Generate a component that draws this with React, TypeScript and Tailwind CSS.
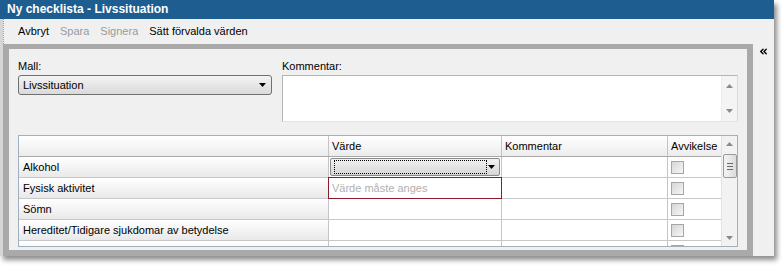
import { ChevronsLeft } from 'lucide-react';

const rows = [
  { label: 'Alkohol', kind: 'select' },
  { label: 'Fysisk aktivitet', kind: 'required' },
  { label: 'Sömn', kind: 'empty' },
  { label: 'Hereditet/Tidigare sjukdomar av betydelse', kind: 'empty' },
  { label: '', kind: 'empty' },
];

function Arrow({ className = '' }: { className?: string }) {
  return (
    <svg width="7" height="4" viewBox="0 0 7 4" className={className}>
      <path d="M0 0h7L3.5 4z" fill="#000" />
    </svg>
  );
}

function Checkbox() {
  return <div className="w-[13px] h-[13px] border border-[#a6a6a6] bg-gradient-to-br from-[#d6d6d6] to-[#f6f6f6]" />;
}

function ScrollArrow({ up }: { up?: boolean }) {
  return (
    <svg width="7" height="4" viewBox="0 0 7 4">
      <path d={up ? 'M0 4h7L3.5 0z' : 'M0 0h7L3.5 4z'} fill="#8a8a8a" />
    </svg>
  );
}

export default function App() {
  return (
    <div className="w-[782px] h-[269px] bg-white relative font-['Liberation_Sans',Arial,sans-serif] text-[11px] text-black">
      {/* Window */}
      <div className="w-[774px] h-[256px] bg-[#f0f0f0] border-l-[3px] border-[#d6d6d6] shadow-[3px_4px_5px_rgba(0,0,0,0.45)] flex flex-col">
        {/* Title */}
        <div className="h-[19px] bg-[#1d5d8f] text-white font-bold text-[12px] leading-[19px] pl-[7px] -ml-[3px]">
          Ny checklista - Livssituation
        </div>
        {/* Toolbar */}
        <div className="h-[25px] flex items-center gap-[11px] pl-[14px] border-l border-dotted border-[#9a9a9a]">
          <span>Avbryt</span>
          <span className="text-[#9a9a9a]">Spara</span>
          <span className="text-[#9a9a9a]">Signera</span>
          <span>Sätt förvalda värden</span>
        </div>
        {/* Body */}
        <div className="flex flex-1">
          <div className="w-[750px] border-[6px] border-t-[5px] border-[#a9a9a9] bg-[#f0f0f0] pt-[9px] pl-[9px] pr-[9px]">
            {/* Top fields */}
            <div className="flex gap-[10px]">
              <div className="w-[254px]">
                <div className="h-[17px] leading-[17px]">Mall:</div>
                <div className="h-[20px] rounded-[3px] border border-[#707070] bg-gradient-to-b from-[#f4f4f4] to-[#dadada] flex items-center justify-between pl-[4px] pr-[5px]">
                  <span>Livssituation</span>
                  <Arrow />
                </div>
              </div>
              <div className="flex-1">
                <div className="h-[17px] leading-[17px]">Kommentar:</div>
                <div className="h-[47px] bg-white border border-[#b4b4b4] border-r-[#dcdcdc] border-b-[#e4e4e4] flex justify-end">
                  <div className="w-[16px] bg-[#f4f4f4] border-l border-[#ececec] flex flex-col items-center justify-between py-[8px]">
                    <ScrollArrow up />
                    <ScrollArrow />
                  </div>
                </div>
              </div>
            </div>
            {/* Grid */}
            <div className="mt-[13px] h-[112px] border border-[#9fb0c0] bg-white flex overflow-hidden">
              <div className="flex-1 flex flex-col">
                <div className="h-[21px] shrink-0 flex border-b border-[#a8a8a8] bg-gradient-to-b from-white to-[#ececec]">
                  <div className="w-[310px] border-r border-[#c4c4c4]" />
                  <div className="w-[173px] border-r border-[#c4c4c4] pl-[3px] leading-[20px]">Värde</div>
                  <div className="w-[166px] border-r border-[#c4c4c4] pl-[3px] leading-[20px]">Kommentar</div>
                  <div className="flex-1 pl-[3px] leading-[20px]">Avvikelse</div>
                </div>
                {rows.map((r, i) => (
                  <div key={i} className="h-[21px] shrink-0 flex border-b border-[#c8c8c8]">
                    <div className="w-[310px] border-r border-[#c4c4c4] bg-gradient-to-b from-white to-[#e9e9e9] pl-[4px] leading-[20px]">
                      {r.label}
                    </div>
                    <div className="w-[173px] border-r border-[#c4c4c4] relative">
                      {r.kind === 'select' && (
                        <div className="absolute left-[1px] top-[1px] right-[1px] h-[18px] rounded-[2px] border border-[#8a8a8a] bg-gradient-to-b from-[#f2f2f2] to-[#d6d6d6] flex items-center justify-between pl-[3px] pr-[4px]">
                          <div className="w-[153px] h-[14px] border border-dotted border-black" />
                          <Arrow />
                        </div>
                      )}
                      {r.kind === 'required' && (
                        <div className="absolute -left-[1px] -top-[1px] -right-[1px] h-[22px] border border-[#8b1c2c] text-[#b0b0b0] pl-[3px] leading-[20px]">
                          Värde måste anges
                        </div>
                      )}
                    </div>
                    <div className="w-[166px] border-r border-[#c4c4c4]" />
                    <div className="flex-1 flex items-center pl-[3px]">
                      <Checkbox />
                    </div>
                  </div>
                ))}
              </div>
              {/* Grid scrollbar */}
              <div className="w-[16px] bg-[#f2f2f2] border-l border-[#e2e2e2] flex flex-col items-center pt-[6px]">
                <ScrollArrow up />
                <div className="mt-[8px] w-[14px] h-[24px] rounded-[2px] border border-[#9a9a9a] bg-gradient-to-r from-[#f4f4f4] to-[#dcdcdc] flex flex-col items-center justify-center gap-[2px]">
                  <div className="w-[6px] h-px bg-[#6a6a6a]" />
                  <div className="w-[6px] h-px bg-[#6a6a6a]" />
                  <div className="w-[6px] h-px bg-[#6a6a6a]" />
                </div>
                <div className="mt-auto mb-[6px]">
                  <ScrollArrow />
                </div>
              </div>
            </div>
          </div>
          {/* Collapse strip */}
          <div className="flex-1 flex justify-center pt-[2px]">
            <ChevronsLeft size={11} strokeWidth={3} />
          </div>
        </div>
      </div>
    </div>
  );
}
